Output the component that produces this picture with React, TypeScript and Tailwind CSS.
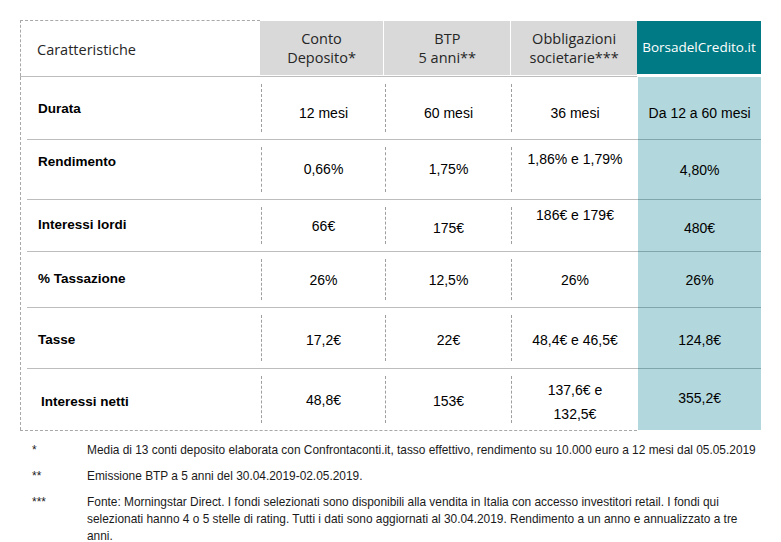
const head = "font-['Open_Sans',sans-serif]";
const body = "font-['Liberation_Sans',Arial,sans-serif]";

type Cell = { text: string[]; pt: number };
type Row = { label: string; lpt: number; lpl?: number; h: number; cells: Cell[]; teal: Cell };

const rows: Row[] = [
  {
    label: "Durata",
    lpt: 25,
    h: 63,
    cells: [
      { text: ["12 mesi"], pt: 28 },
      { text: ["60 mesi"], pt: 28 },
      { text: ["36 mesi"], pt: 28 },
    ],
    teal: { text: ["Da 12 a 60 mesi"], pt: 28 },
  },
  {
    label: "Rendimento",
    lpt: 15,
    h: 60,
    cells: [
      { text: ["0,66%"], pt: 21 },
      { text: ["1,75%"], pt: 21 },
      { text: ["1,86% e 1,79%"], pt: 11 },
    ],
    teal: { text: ["4,80%"], pt: 22 },
  },
  {
    label: "Interessi lordi",
    lpt: 18,
    h: 52,
    cells: [
      { text: ["66€"], pt: 18 },
      { text: ["175€"], pt: 20 },
      { text: ["186€ e 179€"], pt: 7 },
    ],
    teal: { text: ["480€"], pt: 20 },
  },
  {
    label: "% Tassazione",
    lpt: 20,
    h: 56,
    cells: [
      { text: ["26%"], pt: 20 },
      { text: ["12,5%"], pt: 20 },
      { text: ["26%"], pt: 20 },
    ],
    teal: { text: ["26%"], pt: 20 },
  },
  {
    label: "Tasse",
    lpt: 25,
    h: 61,
    cells: [
      { text: ["17,2€"], pt: 24 },
      { text: ["22€"], pt: 24 },
      { text: ["48,4€ e 46,5€"], pt: 24 },
    ],
    teal: { text: ["124,8€"], pt: 24 },
  },
  {
    label: "Interessi netti",
    lpt: 26,
    lpl: 14,
    h: 61,
    cells: [
      { text: ["48,8€"], pt: 23 },
      { text: ["153€"], pt: 24 },
      { text: ["137,6€ e", "132,5€"], pt: 9 },
    ],
    teal: { text: ["355,2€"], pt: 21 },
  },
];

const widths = ["w-[124px]", "w-[126px]", "w-[127px]"];

function DataRow({ row, last }: { row: Row; last: boolean }) {
  return (
    <div className="flex" style={{ height: row.h }}>
      <div className={`flex w-[617px] ${last ? "" : "border-b border-[#bdbdbd]"} ml-[6px]`}>
        <div
          className={`w-[234px] text-[13.5px] leading-[16px] font-bold text-black ${body}`}
          style={{ paddingTop: row.lpt - 1, paddingLeft: row.lpl ?? 11 }}
        >
          {row.label}
        </div>
        {row.cells.map((c, i) => (
          <div key={i} className={`${widths[i]} flex`}>
            <div className="my-[7px] border-l border-dashed border-[#9e9e9e]" />
            <div
              className={`flex-1 text-center text-[14px] text-black ${body} ${c.text.length > 1 ? "leading-6" : "leading-[16px]"}`}
              style={{ paddingTop: c.pt }}
            >
              {c.text.map((t, j) => (
                <div key={j}>{t}</div>
              ))}
            </div>
          </div>
        ))}
      </div>
      <div
        className={`w-[124px] bg-[#b2d7dc] text-center text-[14px] leading-[16px] text-black ${body} ${last ? "" : "border-b border-[#7fa6aa]"}`}
        style={{ paddingTop: row.teal.pt }}
      >
        {row.teal.text[0]}
      </div>
    </div>
  );
}

export default function App() {
  return (
    <div className="w-[781px] h-[542px] bg-white pl-[20px] pt-[20px]">
      <div className="w-[741px]">
        {/* intestazione */}
        <div className="flex h-[57px]">
          <div className="flex w-[617px] border-b border-[#bdbdbd]">
            <div className={`w-[240px] h-full flex items-center pl-[16px] pt-[2px] border-t border-l border-dashed border-[#a8a8a8] text-[14.5px] text-[#262626] ${head}`}>
              Caratteristiche
            </div>
            <div className={`w-[124px] my-[1px] bg-[#d9d9d9] flex flex-col items-center justify-center text-[14.5px] leading-[19px] text-[#262626] ${head}`}>
              <span>Conto</span>
              <span>Deposito*</span>
            </div>
            <div className={`w-[126px] ml-px my-[1px] bg-[#d9d9d9] flex flex-col items-center justify-center text-[14.5px] leading-[19px] text-[#262626] ${head}`}>
              <span>BTP</span>
              <span>5 anni**</span>
            </div>
            <div className={`w-[126px] ml-px my-[1px] bg-[#d9d9d9] flex flex-col items-center justify-center text-[14.5px] leading-[19px] text-[#262626] ${head}`}>
              <span>Obbligazioni</span>
              <span>societarie***</span>
            </div>
          </div>
          <div className={`w-[124px] mt-[1px] mb-[3px] flex items-center justify-center bg-[#007a84] text-[13.5px] text-white ${head}`}>
            BorsadelCredito.it
          </div>
        </div>
        <div className="border-l border-dashed border-[#a8a8a8]">
          {rows.map((r, i) => (
            <DataRow key={r.label} row={r} last={i === rows.length - 1} />
          ))}
        </div>
        <div className="w-[617px] border-t border-dashed border-[#a8a8a8]" />
      </div>
      <div className={`mt-[11px] text-[11.9px] text-[#1a1a1a] ${body}`}>
        <div className="flex leading-[17px]">
          <span className="w-[67px] pl-[12px]">*</span>
          <span className="w-[673px]">
            Media di 13 conti deposito elaborata con Confrontaconti.it, tasso effettivo, rendimento su 10.000 euro a 12 mesi dal 05.05.2019
          </span>
        </div>
        <div className="flex leading-[17px] mt-[9px]">
          <span className="w-[67px] pl-[12px]">**</span>
          <span className="w-[673px]">Emissione BTP a 5 anni del 30.04.2019-02.05.2019.</span>
        </div>
        <div className="flex leading-[17px] mt-[9px]">
          <span className="w-[67px] pl-[12px]">***</span>
          <span className="w-[673px]">
            Fonte: Morningstar Direct. I fondi selezionati sono disponibili alla vendita in Italia con accesso investitori retail. I fondi qui selezionati hanno 4 o 5 stelle di rating. Tutti i dati sono aggiornati al 30.04.2019. Rendimento a un anno e annualizzato a tre anni.
          </span>
        </div>
      </div>
    </div>
  );
}
